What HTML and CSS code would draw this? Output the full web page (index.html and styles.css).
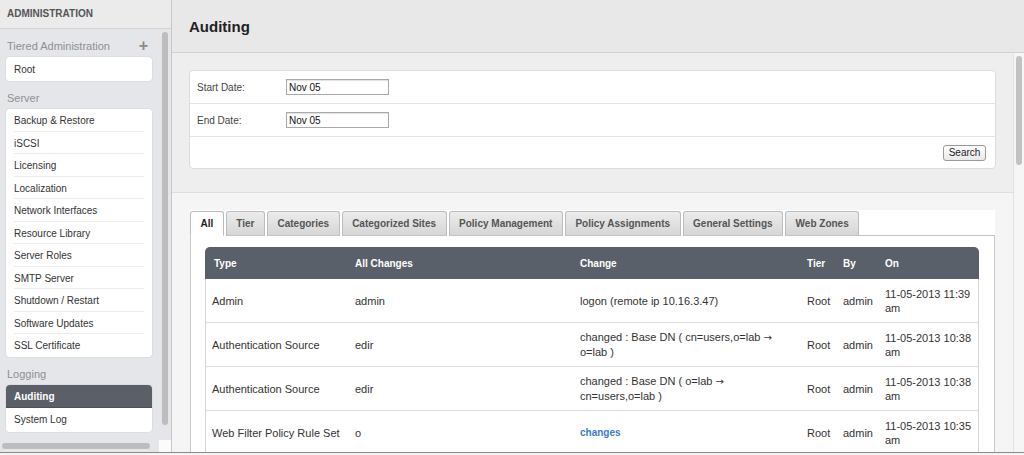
FILE: index.html
```html
<!DOCTYPE html>
<html lang="en">
<head>
<meta charset="utf-8">
<title>Auditing</title>
<link rel="stylesheet" href="styles.css">
</head>
<body>
<div class="app">
  <aside class="sidebar">
    <div class="side-head">ADMINISTRATION</div>
    <div class="side-body">
      <nav class="side-nav">
        <div class="group-title"><span>Tiered Administration</span><span class="plus">+</span></div>
        <ul class="box box-single"><li>Root</li></ul>
        <div class="group-title"><span>Server</span></div>
        <ul class="box">
          <li>Backup &amp; Restore</li>
          <li>iSCSI</li>
          <li>Licensing</li>
          <li>Localization</li>
          <li>Network Interfaces</li>
          <li>Resource Library</li>
          <li>Server Roles</li>
          <li>SMTP Server</li>
          <li>Shutdown / Restart</li>
          <li>Software Updates</li>
          <li>SSL Certificate</li>
        </ul>
        <div class="group-title"><span>Logging</span></div>
        <ul class="box box-logging">
          <li class="active">Auditing</li>
          <li>System Log</li>
        </ul>
      </nav>
      <div class="side-vscroll"><div class="side-vthumb"></div></div>
    </div>
    <div class="side-hscroll"><div class="side-hthumb"></div><div class="side-corner"></div></div>
  </aside>

  <main class="main">
    <header class="main-head"><h1>Auditing</h1></header>
    <div class="main-body">
      <div class="content">
        <section class="filter">
          <div class="form-box">
            <div class="form-row"><label class="form-label">Start Date:</label><input class="date-input" type="text" value="Nov 05"></div>
            <div class="form-row"><label class="form-label">End Date:</label><input class="date-input" type="text" value="Nov 05"></div>
            <div class="form-row form-actions"><button class="search-btn" type="button">Search</button></div>
          </div>
        </section>
        <section class="results">
          <div class="tabs-box">
            <div class="tabs">
              <div class="tab active">All</div>
              <div class="tab">Tier</div>
              <div class="tab">Categories</div>
              <div class="tab">Categorized Sites</div>
              <div class="tab">Policy Management</div>
              <div class="tab">Policy Assignments</div>
              <div class="tab">General Settings</div>
              <div class="tab">Web Zones</div>
            </div>
            <div class="panel">
              <table class="audit">
                <colgroup>
                  <col class="c-type"><col class="c-all"><col class="c-change"><col class="c-tier"><col class="c-by"><col class="c-on">
                </colgroup>
                <thead>
                  <tr><th>Type</th><th>All Changes</th><th>Change</th><th>Tier</th><th>By</th><th>On</th></tr>
                </thead>
                <tbody>
                  <tr><td>Admin</td><td>admin</td><td>logon (remote ip 10.16.3.47)</td><td>Root</td><td>admin</td><td>11-05-2013 11:39 am</td></tr>
                  <tr><td>Authentication Source</td><td>edir</td><td>changed : Base DN ( cn=users,o=lab <span class="arrow">→</span> o=lab )</td><td>Root</td><td>admin</td><td>11-05-2013 10:38 am</td></tr>
                  <tr><td>Authentication Source</td><td>edir</td><td>changed : Base DN ( o=lab <span class="arrow">→</span> cn=users,o=lab )</td><td>Root</td><td>admin</td><td>11-05-2013 10:38 am</td></tr>
                  <tr><td>Web Filter Policy Rule Set</td><td>o</td><td><a class="link" href="#">changes</a></td><td>Root</td><td>admin</td><td>11-05-2013 10:35 am</td></tr>
                </tbody>
              </table>
            </div>
          </div>
        </section>
      </div>
      <div class="main-vscroll"><div class="main-vthumb"></div></div>
    </div>
  </main>
</div>
</body>
</html>
```

FILE: styles.css
```css
* { box-sizing: border-box; }

body {
  margin: 0;
  background: #f4f4f4;
  font-family: "Liberation Sans", Arial, Helvetica, sans-serif;
  color: #333;
  overflow: hidden;
}

.app {
  display: flex;
  width: 1024px;
  height: 453px;
  border-bottom: 1px solid #8a8a8a;
  overflow: hidden;
}

/* ---------- Sidebar ---------- */
.sidebar {
  width: 172px;
  flex: none;
  display: flex;
  flex-direction: column;
  background: #e5e6e9;
  border-right: 1px solid #c8c8ca;
}

.side-head {
  height: 29px;
  flex: none;
  padding: 8px 0 0 7px;
  background: #ebebec;
  border-bottom: 1px solid #d3d3d5;
  font-size: 10px;
  font-weight: bold;
  color: #555;
}

.side-body {
  flex: 1;
  display: flex;
  min-height: 0;
}

.side-nav {
  width: 152px;
  padding-left: 6px;
  flex: none;
}

.group-title {
  display: flex;
  justify-content: space-between;
  align-items: center;
  height: 14px;
  margin: 10px 0 4px;
  padding: 0 4px 0 1px;
  font-size: 11px;
  line-height: 14px;
  color: #8e8f92;
}

.plus {
  font-size: 16px;
  font-weight: bold;
  color: #8a8a8c;
  line-height: 14px;
}

.box {
  list-style: none;
  margin: 0;
  padding: 0;
  background: #fff;
  border-radius: 4px;
  box-shadow: 0 0 0 1px #dcdde0;
  overflow: hidden;
}

.box li {
  height: 22.5px;
  margin: 0 8px;
  border-bottom: 1px solid #ececec;
  font-size: 10px;
  line-height: 23.5px;
  color: #333;
  white-space: nowrap;
  overflow: hidden;
}

.box li:last-child { border-bottom: none; }

.box-single li { height: 24px; line-height: 25px; }

.box-logging li { height: 23.5px; line-height: 24px; }

.box li.active {
  margin: 0;
  padding-left: 8px;
  background: #5b5f67;
  color: #fff;
  font-weight: bold;
  border-bottom: 1px solid #4d5058;
}

.side-vscroll {
  width: 6px;
  margin-left: 10px;
  padding-top: 3px;
}

.side-vthumb {
  width: 6px;
  height: 393px;
  border-radius: 3px;
  background: #bdbdbf;
}

.side-hscroll {
  height: 12px;
  flex: none;
  display: flex;
  justify-content: space-between;
}

.side-hthumb {
  width: 148px;
  height: 6px;
  margin: 3px 0 0 2px;
  border-radius: 3px;
  background: #bdbdbf;
}

.side-corner {
  width: 12px;
  height: 12px;
  background: #fbfbfb;
}

/* ---------- Main ---------- */
.main {
  flex: 1;
  display: flex;
  flex-direction: column;
  min-width: 0;
}

.main-head {
  height: 53px;
  flex: none;
  padding-left: 17px;
  display: flex;
  align-items: center;
  background: #e8e8e9;
  border-bottom: 1px solid #d2d2d4;
}

.main-head h1 {
  margin: 0;
  font-size: 15px;
  font-weight: bold;
  color: #222;
}

.main-body {
  flex: 1;
  display: flex;
  min-height: 0;
  overflow: hidden;
}

.content {
  width: 841px;
  flex: none;
}

.main-vscroll {
  flex: 1;
  background: #f6f6f6;
  border-left: 1px solid #e2e2e2;
  padding: 3px 0 0 2px;
}

.main-vthumb {
  width: 6px;
  height: 109px;
  border-radius: 3px;
  background: #c2c2c4;
}

/* Filter */
.filter {
  padding: 17px 17px 23px;
  background: #eeeeef;
  border-bottom: 1px solid #dedede;
}

.form-box {
  background: #fff;
  border: 1px solid #dcdcdc;
  border-radius: 4px;
}

.form-row {
  height: 33px;
  display: flex;
  align-items: center;
  padding-left: 7px;
  border-bottom: 1px solid #e3e3e3;
}

.form-row:last-child { border-bottom: none; height: 31px; }

.form-label {
  width: 89px;
  font-size: 10px;
  color: #444;
}

.date-input {
  width: 103px;
  height: 16px;
  padding: 0 2px;
  border: 1px solid #a9a9a9;
  box-shadow: inset 0 1px 1px rgba(0,0,0,0.12);
  font-family: "Liberation Sans", Arial, sans-serif;
  font-size: 10px;
  color: #111;
  background: #fff;
}

.form-actions {
  justify-content: flex-end;
  padding-right: 9px;
}

.search-btn {
  width: 43px;
  height: 16px;
  padding: 0;
  border: 1px solid #9a9a9a;
  border-radius: 3px;
  background: linear-gradient(#ffffff, #e9e9e9);
  font-family: "Liberation Sans", Arial, sans-serif;
  font-size: 10px;
  color: #222;
}

/* Results */
.results {
  padding: 17px 18px 0;
  background: #f5f5f5;
}

.tabs-box {
  background: #fff;
}

.tabs {
  display: flex;
  gap: 2px;
  padding-top: 1px;
}

.tab {
  height: 25px;
  padding: 0 9.5px;
  display: flex;
  align-items: center;
  border: 1px solid #bcbcbc;
  border-bottom-color: #c4c4c4;
  border-radius: 3px 3px 0 0;
  background: linear-gradient(#ececec, #d6d6d6);
  font-size: 10px;
  font-weight: bold;
  color: #555;
  white-space: nowrap;
}

.tab.active {
  background: #fff;
  border-bottom-color: #fff;
  color: #222;
  padding: 0 9.5px;
}

.tabs::after {
  content: "";
  flex: 1;
  margin-left: -2px;
  border-bottom: 1px solid #c4c4c4;
}

.panel {
  padding: 11px 15px 0 14px;
  border-left: 1px solid #c8c8c8;
  border-right: 1px solid #c8c8c8;
  height: 240px;
}

.audit {
  width: 774px;
  table-layout: fixed;
  border-collapse: separate;
  border-spacing: 0;
}

.c-type { width: 142px; }
.c-all { width: 225px; }
.c-change { width: 227px; }
.c-tier { width: 36px; }
.c-by { width: 42px; }
.c-on { width: 102px; }

.audit th {
  height: 32px;
  padding: 0 0 0 8px;
  background: #596069;
  color: #fff;
  font-size: 10px;
  font-weight: bold;
  text-align: left;
}

.audit th:first-child { border-top-left-radius: 5px; padding-left: 9px; }
.audit th:last-child { border-top-right-radius: 5px; }

.audit td {
  height: 44px;
  padding: 0 0 0 8px;
  border-bottom: 1px solid #dcdcdc;
  font-size: 11px;
  line-height: 14px;
  color: #333;
  vertical-align: middle;
}

.audit td:first-child { border-left: 1px solid #d6d6d6; padding-left: 6px; }
.audit td:last-child { border-right: 1px solid #d6d6d6; padding-right: 4px; }

.arrow {
  font-family: "DejaVu Sans", sans-serif;
  font-size: 10px;
}

.link {
  color: #3b7bcf;
  font-weight: bold;
  font-size: 10px;
  text-decoration: none;
}
```
